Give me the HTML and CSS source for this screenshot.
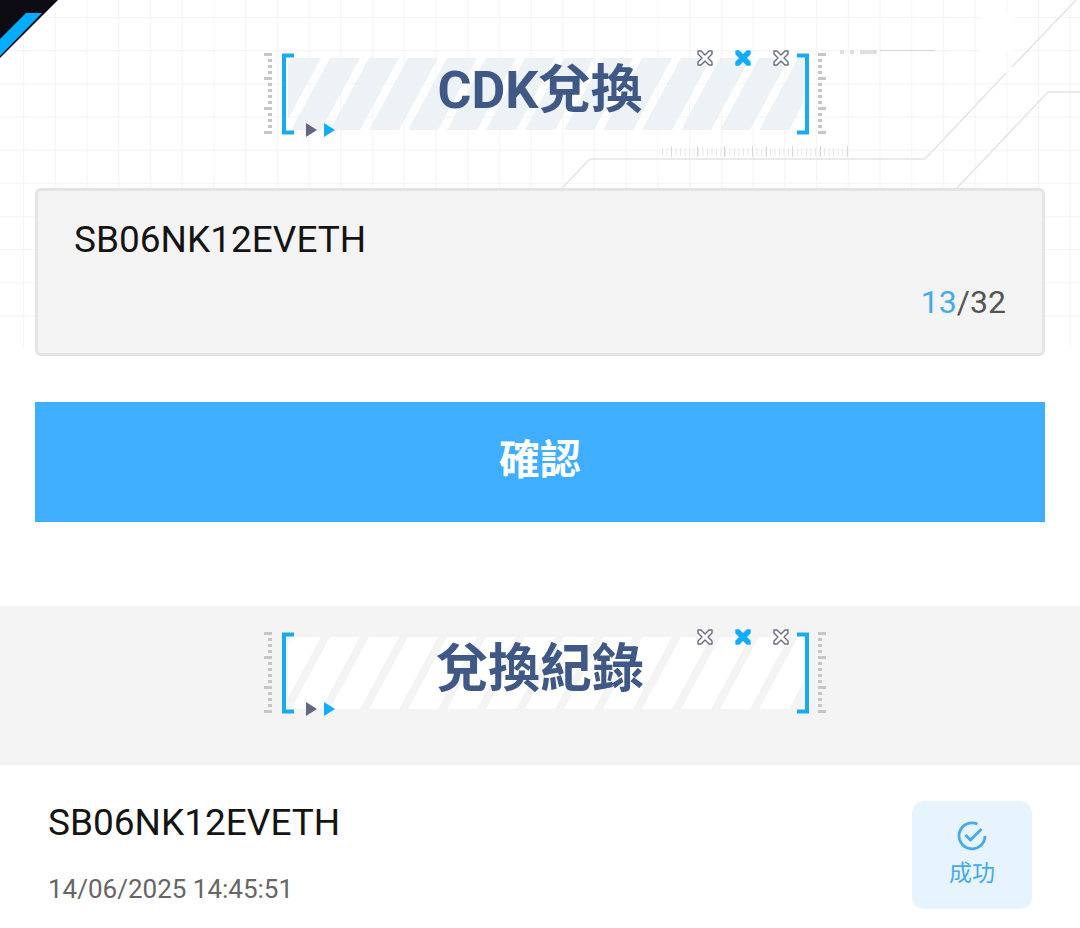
FILE: index.html
```html
<!DOCTYPE html>
<html lang="zh-Hant">
<head>
    <meta charset="UTF-8">
    <meta name="viewport" content="width=device-width, initial-scale=1.0">
    <title>CDK兌換</title>
    <link rel="stylesheet" href="styles.css">
</head>
<body>
    <!-- shared title frame -->
    <svg class="defs" width="0" height="0" aria-hidden="true">
        <defs>
            <clipPath id="stripes-area">
                <rect x="25" y="10" width="516" height="72"/>
            </clipPath>
            <path id="cross" d="M0-3L4-7L7-7L7-4L3 0L7 4L7 7L4 7L0 3L-4 7L-7 7L-7 4L-3 0L-7-4L-7-7L-4-7Z" stroke-linejoin="round"/>
            <g id="ruler" fill="none" stroke="#c6c6c6">
                <path d="M7 5V87" stroke-width="4" stroke-dasharray="3 3"/>
                <path d="M1 6.5H9M1 30.5H9M1 60.5H9M1 84.5H9" stroke-width="3"/>
            </g>
            <symbol id="frame" viewBox="0 0 564 92">
                <g clip-path="url(#stripes-area)">
                    <path d="M28 10H58L19 82H-11ZM67 10H97L58 82H28ZM106 10H136L97 82H67ZM145 10H175L136 82H106ZM184 10H214L175 82H145ZM223 10H253L214 82H184ZM262 10H292L253 82H223ZM301 10H331L292 82H262ZM340 10H370L331 82H301ZM379 10H409L370 82H340ZM418 10H448L409 82H379ZM457 10H487L448 82H418ZM496 10H526L487 82H457ZM535 10H565L526 82H496Z"/>
                </g>
                <use href="#ruler"/>
                <use href="#ruler" transform="matrix(-1 0 0 1 564 0)"/>
                <path d="M31 7.5H21V84.5H31M534 7.5H544V84.5H534" fill="none" stroke="#1aabef" stroke-width="4"/>
                <path d="M43 75L54 82L43 89Z" fill="#636784"/>
                <path d="M61 75L72 82L61 89Z" fill="#12acff"/>
                <use href="#cross" x="442" y="10" fill="#fff" stroke="#696d84" stroke-width="1.4"/>
                <use href="#cross" x="480" y="10" fill="#12acff" stroke="#12acff" stroke-width="1.4"/>
                <use href="#cross" x="518" y="10" fill="#fff" stroke="#696d84" stroke-width="1.4"/>
            </symbol>
        </defs>
    </svg>

    <main>
        <section class="redeem">
            <svg class="backdrop" viewBox="0 0 1080 348" aria-hidden="true">
                <defs>
                    <pattern id="grid" x="23" y="17" width="31.72" height="33.15" patternUnits="userSpaceOnUse">
                        <path d="M.6 0V34M0 .6H32" fill="none" stroke="#f5f5f5" stroke-width="1.2"/>
                    </pattern>
                </defs>
                <rect width="1080" height="348" fill="url(#grid)"/>
                <rect x="981" y="15" width="33" height="37" fill="#fff"/>
                <path d="M562 188L590 159H925L1006 73M1012 67L1078 -2M957 188L1048 92H1080" fill="none" stroke="#e4e4e4" stroke-width="1.5"/>
                <path d="M880 50.5H934" stroke="#d5d5d5"/>
                <path d="M840 52H844M850 52H854M860 52H877" stroke="#dedfe2" stroke-width="4"/>
                <path d="M662 152H848" stroke="#e9e9e9" stroke-width="8" stroke-dasharray="1 3.5"/>
                <path d="M671.5 146V157M697.5 146V157M724.5 146V157M752.5 146V157M766.5 146V157M792.5 146V157M820.5 146V157M847.5 146V157" stroke="#d9d9d9"/>
                <path d="M0 0H58L0 58Z" fill="#0d0b14"/>
                <path d="M0 39L26 13H42L0 56Z" fill="#06acfd"/>
            </svg>

            <form class="redeem-form">
                <div class="title">
                    <svg class="title-frame" aria-hidden="true"><use href="#frame"/></svg>
                    <h1>CDK兌換</h1>
                </div>
                <div class="code-box">
                    <textarea id="code" aria-label="CDK" maxlength="32" spellcheck="false">SB06NK12EVETH</textarea>
                    <p class="counter"><span>13</span>/32</p>
                </div>
                <button type="button" class="confirm">確認</button>
            </form>
        </section>

        <section class="history">
            <header class="history-header">
                <div class="title title-light">
                    <svg class="title-frame" aria-hidden="true"><use href="#frame"/></svg>
                    <h2>兌換紀錄</h2>
                </div>
            </header>
            <ul class="records">
                <li class="record">
                    <div class="record-info">
                        <p class="record-code">SB06NK12EVETH</p>
                        <time datetime="2025-06-14T14:45:51">14/06/2025 14:45:51</time>
                    </div>
                    <div class="status">
                        <svg width="30" height="30" viewBox="0 0 30 30" fill="none" stroke="#46aaec" stroke-width="2.8" aria-hidden="true">
                            <path d="M20.5 3.1A13 13 0 1 0 28 15"/>
                            <path d="M8.5 14L13.5 19L24.5 8"/>
                        </svg>
                        <span>成功</span>
                    </div>
                </li>
            </ul>
        </section>
    </main>
</body>
</html>
```

FILE: styles.css
```css
* {
    box-sizing: border-box;
}

body {
    margin: 0;
    background-color: #fff;
    color: #141414;
    font-family: Roboto, "Noto Sans CJK TC", sans-serif;
}

h1,
h2,
p,
ul {
    margin: 0;
    padding: 0;
}

.defs {
    display: block;
}

/* the backdrop and the form share one grid cell */
.redeem {
    display: grid;
    grid-template-columns: minmax(0, 1fr);
}

.backdrop {
    grid-area: 1 / 1;
    width: 100%;
    height: auto;
}

.redeem-form {
    grid-area: 1 / 1;
    display: flex;
    flex-direction: column;
    padding: 48px 35px 84px;
}

/* the frame is wider on the right, the text stays centred on the page */
.title {
    display: grid;
    justify-items: center;
    width: 100%;
    max-width: 574px;
    margin: 0 auto;
}

.title-frame {
    grid-area: 1 / 1;
    width: 100%;
    height: 92px;
    padding-left: 10px;
    fill: #ecf2f5;
}

.title-light .title-frame {
    fill: #fff;
}

h1,
h2 {
    grid-area: 1 / 1;
    color: #3f5885;
    font-size: 52px;
    font-weight: 700;
    line-height: 86px;
}

.code-box {
    display: flex;
    flex-direction: column;
    margin: 48px 0 46px;
    padding: 27px 36px;
    background-color: #f4f4f4;
    border: 3px solid #e4e4e4;
    border-radius: 6px;
}

textarea {
    display: block;
    width: 100%;
    height: 60px;
    padding: 0;
    border: 0;
    outline: 0;
    resize: none;
    background: none;
    color: #141414;
    font: 37px/44px Roboto, "Noto Sans CJK TC", sans-serif;
}

.counter {
    color: #555;
    font-size: 32px;
    line-height: 48px;
    text-align: right;
}

.counter span {
    color: #46aaec;
}

.confirm {
    height: 120px;
    padding: 0 0 12px;
    border: 0;
    background-color: #3faeff;
    color: #fff;
    font-family: "Noto Sans CJK TC", sans-serif;
    font-size: 41px;
    font-weight: 700;
    cursor: pointer;
}

.history-header {
    padding: 21px 35px 46px;
    background-color: #f4f4f4;
}

.records {
    list-style: none;
}

.record {
    display: flex;
    justify-content: space-between;
    padding: 36px 48px 20px;
}

.record-info {
    display: flex;
    flex-direction: column;
    gap: 28px;
}

.record-code {
    font-size: 37px;
    line-height: 44px;
}

time {
    color: #666;
    font-size: 26px;
    line-height: 32px;
}

.status {
    display: flex;
    flex-direction: column;
    align-items: center;
    gap: 8px;
    width: 120px;
    height: 108px;
    padding-top: 20px;
    border-radius: 12px;
    background-color: #e7f4fe;
    color: #46aaec;
    font-size: 23px;
    line-height: 30px;
}
```
